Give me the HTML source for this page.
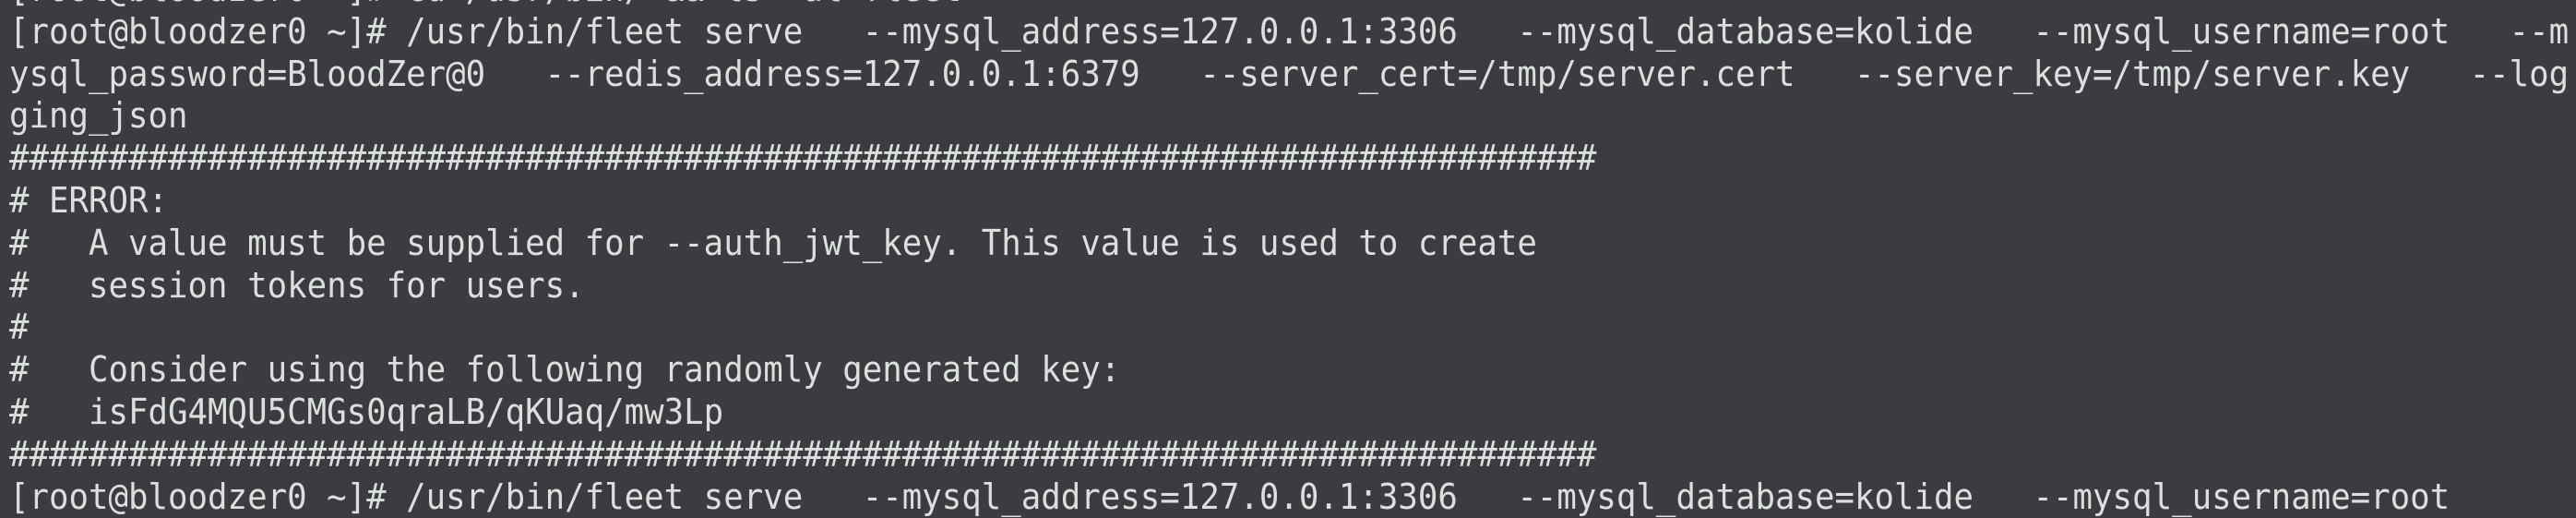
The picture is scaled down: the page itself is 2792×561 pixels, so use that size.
<!DOCTYPE html>
<html><head><meta charset="utf-8"><style>
html,body{margin:0;padding:0;background:#3b3c3f;width:2792px;height:526px;overflow:hidden}
pre{margin:0;position:absolute;left:10px;top:-34px;font-family:"DejaVu Sans Mono","Liberation Mono",monospace;font-size:38px;line-height:45.8px;color:#dcdfdf;white-space:pre;transform:scaleX(0.94);transform-origin:0 0}
</style></head><body>
<pre>[root@bloodzer0 ~]# cd /usr/bin/ &amp;&amp; ls -al fleet
[root@bloodzer0 ~]# /usr/bin/fleet serve   --mysql_address=127.0.0.1:3306   --mysql_database=kolide   --mysql_username=root   --m
ysql_password=BloodZer@0   --redis_address=127.0.0.1:6379   --server_cert=/tmp/server.cert   --server_key=/tmp/server.key   --log
ging_json
################################################################################
# ERROR:
#   A value must be supplied for --auth_jwt_key. This value is used to create
#   session tokens for users.
#
#   Consider using the following randomly generated key:
#   isFdG4MQU5CMGs0qraLB/qKUaq/mw3Lp
################################################################################
[root@bloodzer0 ~]# /usr/bin/fleet serve   --mysql_address=127.0.0.1:3306   --mysql_database=kolide   --mysql_username=root</pre>
</body></html>
